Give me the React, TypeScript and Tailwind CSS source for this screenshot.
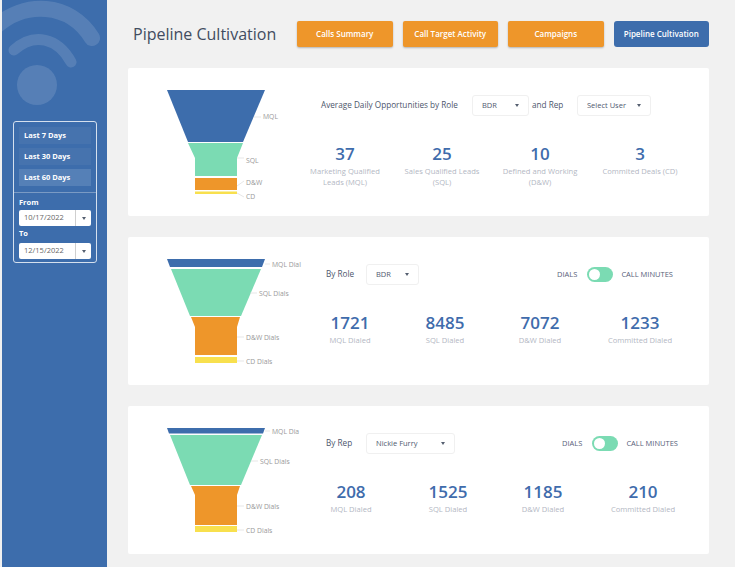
import React from "react";

const BLUE = "#3d6dac";
const GREEN = "#7bdbb3";
const ORANGE = "#ee962a";
const YELLOW = "#f8e04e";

type Shape = { points: string; fill: string };
type Tag = { text: string; x: number; y: number; line: string };

const Funnel = ({ shapes, tags }: { shapes: Shape[]; tags: Tag[] }) => (
  <svg width="140" height="148" viewBox="0 0 140 148" className="shrink-0 ml-[30px] overflow-visible">
    {shapes.map((s) => (
      <polygon key={s.points} points={s.points} fill={s.fill} />
    ))}
    {tags.map((t) => (
      <g key={t.text}>
        <path d={t.line} stroke="#dcdcdc" strokeWidth="0.7" fill="none" />
        <text x={t.x} y={t.y} fontSize="6.8" fill="#999999" fontFamily="'Open Sans', sans-serif">
          {t.text}
        </text>
      </g>
    ))}
  </svg>
);

const Caret = () => (
  <span className="w-0 h-0 border-x-[2.5px] border-x-transparent border-t-[3px] border-t-[#555f70]" />
);

const Select = ({ value, width }: { value: string; width: string }) => (
  <div className={`${width} h-[21px] flex items-center justify-between pl-[9px] pr-[9px] bg-white border border-[#f0f0f0] rounded-[3px] text-[7.5px] font-medium text-[#505a70]`}>
    <span>{value}</span>
    <Caret />
  </div>
);

const Toggle = () => (
  <div className="w-[26px] h-[15px] p-[2px] rounded-full bg-[#7bdbb3]">
    <div className="w-[11px] h-[11px] rounded-full bg-white" />
  </div>
);

const Stat = ({ num, label }: { num: string; label: string }) => (
  <div className="flex flex-col items-center text-center">
    <div className="text-[17px] leading-[22px] font-semibold text-[#3f6cac]">{num}</div>
    <div className="max-w-[76px] mt-[1px] text-[7.6px] leading-[11px] text-[#b3b7c3]">{label}</div>
  </div>
);

const DialsSwitch = ({ right }: { right: string }) => (
  <div className={`flex items-center gap-[10px] ml-auto ${right} text-[7.5px] font-medium text-[#59627a]`}>
    <span>DIALS</span>
    <Toggle />
    <span className="-ml-[2px]">CALL MINUTES</span>
  </div>
);

const DateField = ({ value }: { value: string }) => (
  <div className="h-[16px] flex items-center bg-white rounded-[2px] text-[7.5px] text-[#666]">
    <span className="flex-1 pl-[5px]">{value}</span>
    <span className="w-[16px] h-full flex items-center justify-center border-l border-[#cfcfcf]">
      <Caret />
    </span>
  </div>
);

const Sidebar = () => (
  <aside className="relative ml-[2px] w-[105px] shrink-0 h-full bg-[#3d6dac] overflow-hidden pt-[121px] pl-[11px]">
    <svg className="absolute left-0 top-0" width="105" height="110" viewBox="0 0 105 110" fill="none">
      <g stroke="#fff" strokeOpacity="0.13" strokeLinecap="round">
        <path d="M-8 28 C 22 0 68 2 90 38" strokeWidth="16" />
        <path d="M12 50 C 32 32 56 38 69 62" strokeWidth="11" />
      </g>
      <circle cx="35" cy="85" r="20" fill="#fff" fillOpacity="0.13" />
    </svg>
    <div className="relative w-[84px] h-[142px] border border-[#d5e0ee] rounded-[3px] pt-[5px] text-white">
      <div className="flex flex-col gap-[4px] px-[5px]">
        <div className="h-[17px] flex items-center pl-[5px] bg-[#4673ae] text-[7.5px] font-bold">Last 7 Days</div>
        <div className="h-[17px] flex items-center pl-[5px] bg-[#4673ae] text-[7.5px] font-bold">Last 30 Days</div>
        <div className="h-[17px] flex items-center pl-[5px] bg-[#5580b7] text-[7.5px] font-bold">Last 60 Days</div>
      </div>
      <div className="mt-[6px] border-t border-[#7a9ac4] px-[5px] pt-[4px]">
        <div className="text-[7.5px] leading-[11px] font-bold">From</div>
        <div className="mt-[2px]">
          <DateField value="10/17/2022" />
        </div>
        <div className="mt-[2px] text-[7.5px] leading-[11px] font-bold">To</div>
        <div className="mt-[4px]">
          <DateField value="12/15/2022" />
        </div>
      </div>
    </div>
  </aside>
);

const NavButton = ({ label, active }: { label: string; active?: boolean }) => (
  <button
    className={`w-[95.5px] h-[26px] text-[8px] font-semibold text-white ${
      active ? "bg-[#3d6dac] rounded-[3px]" : "bg-[#ee962a] rounded-[2px] shadow-[0_1px_2px_rgba(0,0,0,0.25)]"
    }`}
  >
    {label}
  </button>
);

const Card = ({ children }: { children: React.ReactNode }) => (
  <section className="h-[148px] flex bg-white rounded-[2px]">{children}</section>
);

const App = () => {
  return (
    <div
      className="w-[735px] h-[567px] flex overflow-hidden bg-[#f1f1f1]"
      style={{ fontFamily: "'Open Sans', sans-serif" }}
    >
      <Sidebar />
      <main className="flex-1 pl-[21px] pr-[26px]">
        <header className="h-[68px] flex items-start pt-[21px]">
          <h1 className="ml-[5px] w-[164px] h-[26px] flex items-center text-[16px] font-normal text-[#414c60] whitespace-nowrap">
            Pipeline Cultivation
          </h1>
          <div className="flex gap-[10px]">
            <NavButton label="Calls Summary" />
            <NavButton label="Call Target Activity" />
            <NavButton label="Campaigns" />
            <NavButton label="Pipeline Cultivation" active />
          </div>
        </header>

        <div className="flex flex-col gap-[21px]">
          <Card>
            <Funnel
              shapes={[
                { points: "9,22 107,22 85,74 30,74", fill: BLUE },
                { points: "30,75 85,75 79,90 79,108 37,108 37,90", fill: GREEN },
                { points: "37,110 79,110 79,122 37,122", fill: ORANGE },
                { points: "37,123.5 79,123.5 79,126 37,126", fill: YELLOW },
              ]}
              tags={[
                { text: "MQL", x: 105, y: 51, line: "M96 49 L103 49" },
                { text: "SQL", x: 88, y: 95, line: "M79 90 L86 90" },
                { text: "D&W", x: 88, y: 117, line: "M79 118 L86 113" },
                { text: "CD", x: 88, y: 131, line: "M79 125 L86 129" },
              ]}
            />
            <div className="flex-1 pt-[27px]">
              <div className="flex items-center pl-[23px] text-[8.2px] font-medium text-[#4d566c]">
                <span className="w-[151px]">Average Daily Opportunities by Role</span>
                <Select value="BDR" width="w-[57px]" />
                <span className="w-[48px] pl-[3px]">and Rep</span>
                <Select value="Select User" width="w-[74px]" />
              </div>
              <div className="grid grid-cols-[94px_100px_96px_104px] mt-[27px]">
                <Stat num="37" label="Marketing Qualified Leads (MQL)" />
                <Stat num="25" label="Sales Qualified Leads (SQL)" />
                <Stat num="10" label="Defined and Working (D&W)" />
                <Stat num="3" label="Commited Deals (CD)" />
              </div>
            </div>
          </Card>

          <Card>
            <Funnel
              shapes={[
                { points: "9,22 107,22 104,30 12,30", fill: BLUE },
                { points: "13,32 103,32 83,79 32,79", fill: GREEN },
                { points: "33,80 82,80 79,90 79,118 37,118 37,90", fill: ORANGE },
                { points: "37,120 79,120 79,126 37,126", fill: YELLOW },
              ]}
              tags={[
                { text: "MQL Dial", x: 114, y: 30, line: "M107 27 L112 27" },
                { text: "SQL Dials", x: 101, y: 59, line: "M92 56 L99 56" },
                { text: "D&W Dials", x: 88, y: 103, line: "M79 100 L86 100" },
                { text: "CD Dials", x: 88, y: 127, line: "M79 124 L86 124" },
              ]}
            />
            <div className="flex-1 pt-[27px]">
              <div className="flex items-center pl-[28px] text-[8.2px] font-medium text-[#4d566c]">
                <span className="w-[40px]">By Role</span>
                <Select value="BDR" width="w-[53px]" />
                <DialsSwitch right="mr-[36px]" />
              </div>
              <div className="grid grid-cols-[104px_86px_104px_96px] mt-[27px]">
                <Stat num="1721" label="MQL Dialed" />
                <Stat num="8485" label="SQL Dialed" />
                <Stat num="7072" label="D&W Dialed" />
                <Stat num="1233" label="Committed Dialed" />
              </div>
            </div>
          </Card>

          <Card>
            <Funnel
              shapes={[
                { points: "9,22 107,22 105,27.5 11,27.5", fill: BLUE },
                { points: "12,29 104,29 83,79 32,79", fill: GREEN },
                { points: "33,80 82,80 79,89 79,119 37,119 37,89", fill: ORANGE },
                { points: "37,120 79,120 79,126 37,126", fill: YELLOW },
              ]}
              tags={[
                { text: "MQL Dia", x: 114, y: 28, line: "M107 25 L112 25" },
                { text: "SQL Dials", x: 102, y: 58, line: "M93 55 L100 55" },
                { text: "D&W Dials", x: 88, y: 103, line: "M79 100 L86 100" },
                { text: "CD Dials", x: 88, y: 127, line: "M79 124 L86 124" },
              ]}
            />
            <div className="flex-1 pt-[27px]">
              <div className="flex items-center pl-[28px] text-[8.2px] font-medium text-[#4d566c]">
                <span className="w-[40px]">By Rep</span>
                <Select value="Nickie Furry" width="w-[89px]" />
                <DialsSwitch right="mr-[31px]" />
              </div>
              <div className="grid grid-cols-[106px_88px_102px_98px] mt-[27px]">
                <Stat num="208" label="MQL Dialed" />
                <Stat num="1525" label="SQL Dialed" />
                <Stat num="1185" label="D&W Dialed" />
                <Stat num="210" label="Committed Dialed" />
              </div>
            </div>
          </Card>
        </div>
      </main>
    </div>
  );
};

export default App;
